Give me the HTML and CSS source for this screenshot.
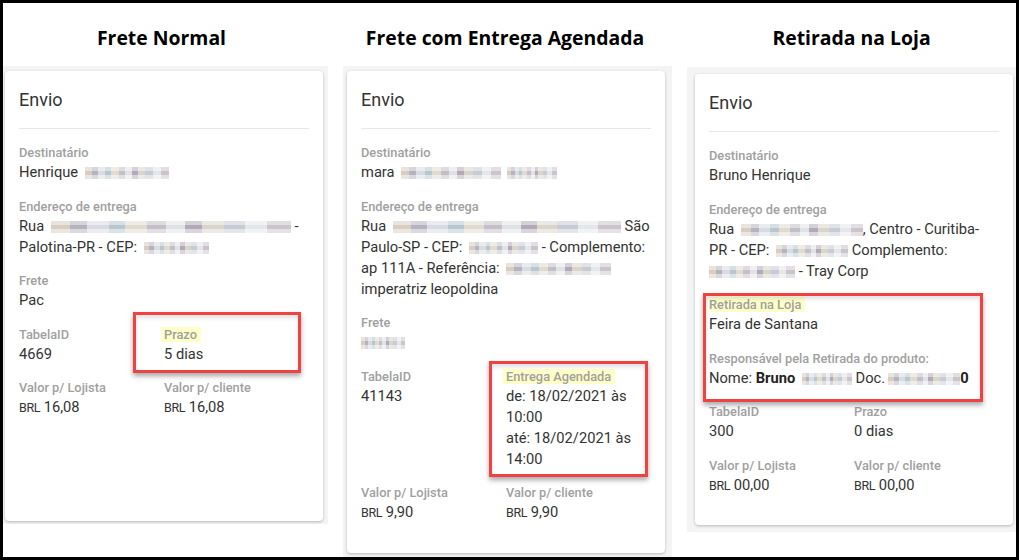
FILE: index.html
```html
<!DOCTYPE html>
<html lang="pt-BR">
<head>
<meta charset="UTF-8" />
<meta name="viewport" content="width=device-width, initial-scale=1.0" />
<title>Tipos de frete</title>
<link rel="stylesheet" href="styles.css">
</head>
<body>

<div class="frame">

  <!-- Frete normal -->
  <div class="col col-normal">
    <h2 class="col-title">Frete Normal</h2>
    <div class="panel">
      <div class="card card-tall">
        <div class="card-header">Envio</div>
        <div class="card-body">
          <div class="field">
            <div class="label">Destinatário</div>
            <div class="value">Henrique <span class="px w84"></span></div>
          </div>
          <div class="field">
            <div class="label">Endereço de entrega</div>
            <div class="value">Rua <span class="px w240"></span> -<br>Palotina-PR - CEP: <span class="px w65"></span></div>
          </div>
          <div class="field">
            <div class="label">Frete</div>
            <div class="value">Pac</div>
          </div>
          <div class="row">
            <div class="field">
              <div class="label">TabelaID</div>
              <div class="value">4669</div>
            </div>
            <div class="field">
              <div class="label"><span class="hl">Prazo</span></div>
              <div class="value">5 dias</div>
            </div>
          </div>
          <div class="row">
            <div class="field">
              <div class="label">Valor p/ Lojista</div>
              <div class="value"><span class="cur">BRL</span> 16,08</div>
            </div>
            <div class="field">
              <div class="label">Valor p/ cliente</div>
              <div class="value"><span class="cur">BRL</span> 16,08</div>
            </div>
          </div>
        </div>
        <div class="mark mark-normal"></div>
      </div>
    </div>
  </div>

  <!-- Frete com entrega agendada -->
  <div class="col col-agendada">
    <h2 class="col-title">Frete com Entrega Agendada</h2>
    <div class="panel">
      <div class="card">
        <div class="card-header">Envio</div>
        <div class="card-body">
          <div class="field">
            <div class="label">Destinatário</div>
            <div class="value">mara <span class="px w100"></span><span class="px w50 gap"></span></div>
          </div>
          <div class="field">
            <div class="label">Endereço de entrega</div>
            <div class="value">Rua <span class="px w228"></span> São<br>Paulo-SP - CEP: <span class="px w69"></span> - Complemento:<br>ap 111A - Referência: <span class="px w105"></span><br>imperatriz leopoldina</div>
          </div>
          <div class="field">
            <div class="label">Frete</div>
            <div class="value"><span class="px w44 nolead"></span></div>
          </div>
          <div class="row">
            <div class="field">
              <div class="label">TabelaID</div>
              <div class="value">41143</div>
            </div>
            <div class="field">
              <div class="label"><span class="hl">Entrega Agendada</span></div>
              <div class="value">de: 18/02/2021 às<br>10:00<br>até: 18/02/2021 às<br>14:00</div>
            </div>
          </div>
          <div class="row">
            <div class="field">
              <div class="label">Valor p/ Lojista</div>
              <div class="value"><span class="cur">BRL</span> 9,90</div>
            </div>
            <div class="field">
              <div class="label">Valor p/ cliente</div>
              <div class="value"><span class="cur">BRL</span> 9,90</div>
            </div>
          </div>
        </div>
        <div class="mark mark-agendada"></div>
      </div>
    </div>
  </div>

  <!-- Retirada na loja -->
  <div class="col col-loja">
    <h2 class="col-title">Retirada na Loja</h2>
    <div class="panel">
      <div class="card">
        <div class="card-header">Envio</div>
        <div class="card-body">
          <div class="field">
            <div class="label">Destinatário</div>
            <div class="value">Bruno Henrique</div>
          </div>
          <div class="field">
            <div class="label">Endereço de entrega</div>
            <div class="value">Rua <span class="px w122"></span>, Centro - Curitiba-<br>PR - CEP: <span class="px w72"></span> Complemento:<br><span class="px w86 nolead"></span> - Tray Corp</div>
          </div>
          <div class="field">
            <div class="label"><span class="hl hl-start">Retirada na Loja</span></div>
            <div class="value">Feira de Santana</div>
          </div>
          <div class="field">
            <div class="label">Responsável pela Retirada do produto:</div>
            <div class="value">Nome: <b>Bruno</b> <span class="px w50"></span> Doc.<span class="px w72"></span><b>0</b></div>
          </div>
          <div class="row">
            <div class="field">
              <div class="label">TabelaID</div>
              <div class="value">300</div>
            </div>
            <div class="field">
              <div class="label">Prazo</div>
              <div class="value">0 dias</div>
            </div>
          </div>
          <div class="row">
            <div class="field">
              <div class="label">Valor p/ Lojista</div>
              <div class="value"><span class="cur">BRL</span> 00,00</div>
            </div>
            <div class="field">
              <div class="label">Valor p/ cliente</div>
              <div class="value"><span class="cur">BRL</span> 00,00</div>
            </div>
          </div>
        </div>
        <div class="mark mark-loja"></div>
      </div>
    </div>
  </div>

</div>

</body>
</html>
```

FILE: styles.css
```css
/* Рамка вокруг всего снимка */
html, body {
  margin: 0;
  padding: 0;
  background: #fff;
}

.frame {
  width: 1019px;
  height: 560px;
  box-sizing: border-box;
  border: 3px solid #000;
  overflow: hidden;
  display: grid;
  grid-template-columns: 325px 329px 329px;
  column-gap: 15px;
  align-items: start;
  font-family: Roboto, "Liberation Sans", sans-serif;
  color: #333;
}

/* Заголовки колонок */
.col-title {
  margin: 0;
  padding-top: 7px;
  height: 63px;
  box-sizing: border-box;
  line-height: 56px;
  text-align: center;
  font-family: "Open Sans", "Liberation Sans", sans-serif;
  font-size: 19.4px;
  font-weight: 700;
  color: #000;
}

.col-normal .col-title {
  padding-right: 8px;
}

.col-agendada .col-title {
  padding-right: 5px;
}

.col-loja .col-title {
  height: 64px;
}

/* Серый фон под карточкой */
.panel {
  background: #f4f4f4;
}

.col-normal .panel {
  padding: 5px 5px 3px 2px;
}

.col-agendada .panel {
  padding: 5px 7px 5px 4px;
}

.col-loja .panel {
  padding: 7px 3px 7px 8px;
}

/* Карточка */
.card {
  position: relative;
  width: 318px;
  box-sizing: border-box;
  background: #fff;
  border-radius: 4px;
  box-shadow: 0 1px 3px rgba(0,0,0,0.25);
  padding: 17px 14px 15px;
}

.card-tall {
  min-height: 450px;
}

.card-header {
  font-size: 18px;
  line-height: 24px;
  color: #333;
  padding-bottom: 16px;
  border-bottom: 1px solid #e4e7eb;
}

.card-body {
  padding-top: 15px;
}

/* Поля */
.field {
  margin-bottom: 14.5px;
}

.row {
  display: grid;
  grid-template-columns: 1fr 1fr;
}

.label {
  font-size: 12.8px;
  line-height: 18px;
  font-weight: 500;
  color: #a0a0a0;
  white-space: nowrap;
}

.value {
  font-size: 14.7px;
  line-height: 21px;
  color: #333;
  white-space: nowrap;
}

.value b {
  font-weight: 700;
  color: #222;
}

.cur {
  font-size: 12.5px;
  letter-spacing: -0.4px;
}

/* Подсветка подписи */
.hl {
  background: #ffffc8;
  padding: 0 4px 0 3px;
  margin-left: -3px;
}

.hl.hl-start {
  margin-left: 0;
  padding-left: 0;
}

/* Замазанные данные */
.px {
  display: inline-block;
  height: 12px;
  vertical-align: -2px;
  margin-left: 3px;
  background-image:
    linear-gradient(180deg, rgba(255,255,255,0.45) 0 35%, rgba(255,255,255,0) 35% 70%, rgba(255,255,255,0.5) 70%),
    linear-gradient(90deg, #d9cdc2 0 8%, #b6b3c0 8% 15%, #d8dbe1 15% 24%, #b7c6cf 24% 31%, #e1dacf 31% 40%, #c2bfc9 40% 48%, #e0e3e6 48% 56%, #b4a9b8 56% 63%, #d9d5cc 63% 72%, #c6cbd4 72% 81%, #e5e6ea 81% 90%, #cbc4cc 90%);
}

.px.nolead {
  margin-left: 0;
}

.px.gap {
  margin-left: 6px;
}

.w44 { width: 44px; }
.w50 { width: 50px; }
.w65 { width: 65px; }
.w69 { width: 69px; }
.w72 { width: 72px; }
.w84 { width: 84px; }
.w86 { width: 86px; }
.w100 { width: 100px; }
.w105 { width: 105px; }
.w122 { width: 122px; }
.w228 { width: 228px; }
.w240 { width: 240px; }

/* Красные рамки-пометки поверх карточки */
.mark {
  position: absolute;
  border: 3px solid #ef4242;
  box-sizing: border-box;
  box-shadow: 0 3px 5px rgba(0,0,0,0.35), inset 0 3px 4px rgba(0,0,0,0.12);
  pointer-events: none;
}

.mark-normal {
  left: 128px;
  top: 241px;
  width: 168px;
  height: 61px;
}

.mark-agendada {
  left: 142px;
  top: 290px;
  width: 159px;
  height: 116px;
}

.mark-loja {
  left: 8px;
  top: 219px;
  width: 280px;
  height: 109px;
}
```
